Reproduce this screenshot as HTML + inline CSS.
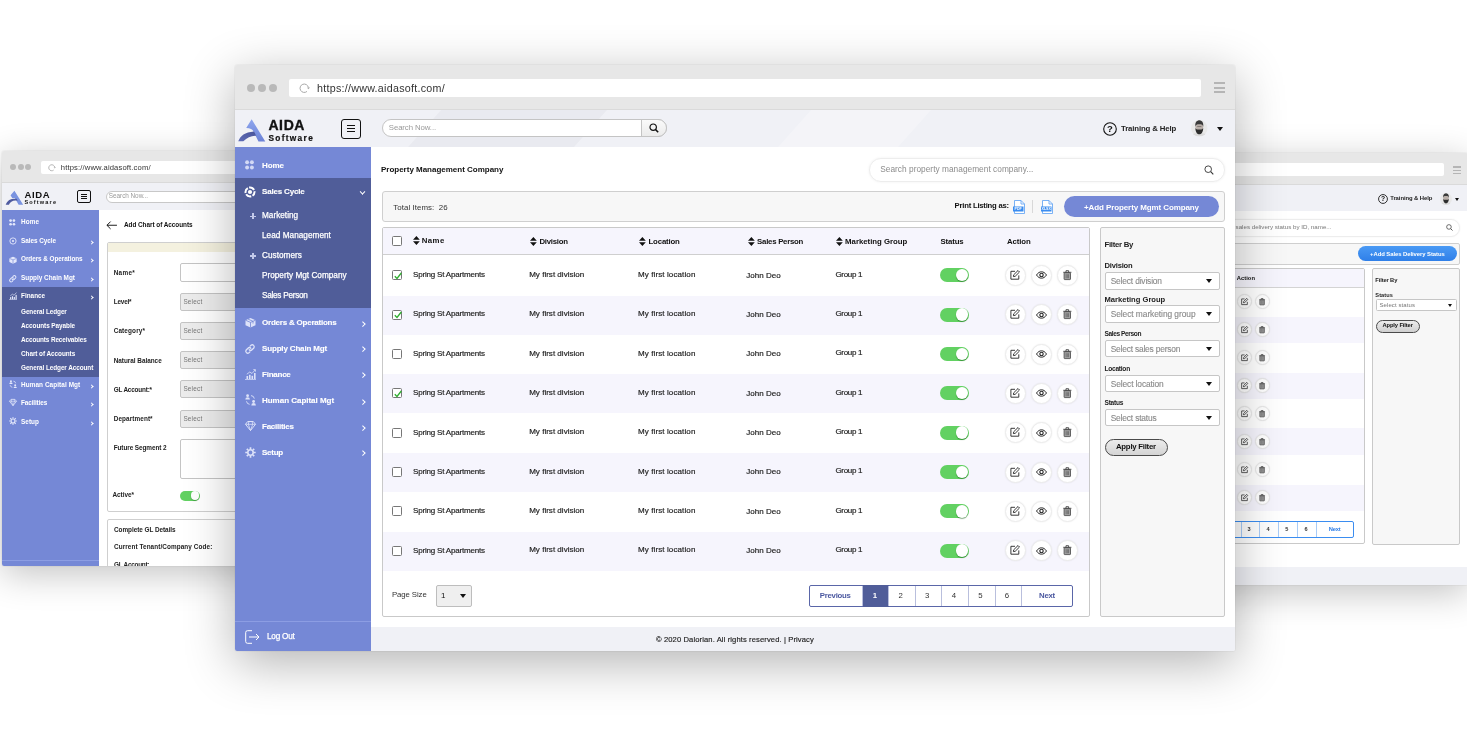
<!DOCTYPE html>
<html lang="en">
<head>
<meta charset="utf-8">
<title>AIDA Software - Property Management Company</title>
<style>
*{box-sizing:border-box;margin:0;padding:0}
html,body{width:1467px;height:738px;overflow:hidden;background:#fff}
body{font-family:"Liberation Sans",sans-serif;color:#1c1c1c;position:relative;font-size:8px}
.abs{position:absolute}
.win{position:absolute;background:#fff;overflow:hidden;will-change:transform}
.chrome{position:absolute;left:0;top:0;right:0;background:#e7e7e7;z-index:2}
.dot{position:absolute;border-radius:50%;background:#b9b9b9}
.url{position:absolute;background:#fff;border-radius:2px;color:#333}
.hdr{position:absolute;left:0;right:0;background:#f0f1f6}
.side{position:absolute;left:0;background:#7588d6;color:#fff;font-weight:bold}
.t{position:absolute;white-space:nowrap;line-height:1}
svg{position:absolute;overflow:visible}
/* main window */
#w1{left:235px;top:65px;width:1000px;height:586px;border-radius:2px;box-shadow:0 12px 50px rgba(0,0,0,.3),0 0 1.500px rgba(0,0,0,.2)}
#w1 .chrome{height:45px;border-bottom:1px solid #dadada}
#w1 .hdr{top:44px;height:38px}
#w1 .side{top:82px;width:136px;height:504px}
#w1 .side .dark{position:absolute;left:0;top:26px;width:136px;height:134px;background:#505d99}
#w1 .side .t{font-size:8.3px;letter-spacing:-.1px}
#w1 .side .sub{font-weight:normal;font-size:8.3px}
.chev{position:absolute;width:3.600px;height:3.600px;border-right:1.100px solid #fff;border-top:1.100px solid #fff;transform:rotate(45deg)}
.row{position:absolute;left:148px;width:705px;height:39.5px}
.row.alt{background:#f6f5fd}
.row .t{font-size:7.8px;color:#222}
.cb{position:absolute;width:10px;height:10px;border:1px solid #777;border-radius:1.500px;background:#fff}
.tog{position:absolute;width:29px;height:14px;border-radius:7px;background:#62d162}
.tog:after{content:"";position:absolute;right:.8px;top:.8px;width:12.400px;height:12.400px;border-radius:50%;background:#fff;box-shadow:0 1px 1px rgba(0,70,0,.45)}
.ic{position:absolute;width:21px;height:21px;border-radius:50%;background:#fff;border:1px solid #ececec;box-shadow:0 0 2px rgba(0,0,0,.08)}
.sel{position:absolute;background:#fff;border:1px solid #c9c9c9;border-radius:2px;font-size:7.8px;color:#8a8a8a}
.sel .t{left:5px;top:4px}
.sel:after{content:"";position:absolute;right:5px;top:6px;border-left:3.5px solid transparent;border-right:3.5px solid transparent;border-top:4px solid #111}
.lbl{font-size:7.6px;font-weight:bold;color:#222}
.pg{position:absolute;top:0;height:22px;border-left:1px solid #c6cae0;font-size:7.8px;color:#333;text-align:center;line-height:21px}
</style>
</head>
<body>
<!-- ================= LEFT WINDOW ================= -->
<div class="win" id="w2" style="left:2px;top:151px;width:705px;height:415px;border-radius:2px;box-shadow:0 8px 36px rgba(0,0,0,.24),0 0 1.500px rgba(0,0,0,.2)">
<div class="abs" style="left:0.0px;top:0.0px;width:705.0px;height:32.0px;background:#e7e7e7;border-bottom:1px solid #dadada"></div>
<div class="abs" style="left:7.8px;top:13.2px;width:6.0px;height:6.0px;background:#b9b9b9;border-radius:50%"></div>
<div class="abs" style="left:15.6px;top:13.2px;width:6.0px;height:6.0px;background:#b9b9b9;border-radius:50%"></div>
<div class="abs" style="left:23.3px;top:13.2px;width:6.0px;height:6.0px;background:#b9b9b9;border-radius:50%"></div>
<div class="abs" style="left:38.5px;top:10.0px;width:642.5px;height:13.0px;background:#fff;border-radius:2px"></div>
<svg width="7.5" height="7.5" viewBox="0 0 10 10" style="left:45.5px;top:12.7px"><path d="M7.570 8.060A4 4 0 1 1 8.940 4.310" fill="none" stroke="#a8a8a8" stroke-width="1.100"/><path d="M9.180 5.900L10.400 4.050 7.500 4.500z" fill="#a8a8a8"/></svg>
<div class="t" style="left:58.8px;top:12.8px;font-size:7.600px;color:#333;letter-spacing:0.15px;">https://www.aidasoft.com/</div>
<div class="abs" style="left:0.0px;top:32.0px;width:705.0px;height:27.0px;background:#f0f1f6"></div>
<svg width="19.5" height="15.5" viewBox="0 0 28 24" style="left:2.5px;top:38.5px"><path d="M13.500 1L27 23H20L14 12.500 10 12.500 7.500 8z" fill="#7a93e0"/><path d="M0 23C3 15 8 13 17 13.500L18.500 16.500C11 15.500 7 18 5 23z" fill="#4f5ba0"/></svg>
<div class="t" style="left:22.4px;top:38.7px;font-size:9.500px;font-weight:bold;color:#111;letter-spacing:0.69px;">AIDA</div>
<div class="t" style="left:22.4px;top:49.0px;font-size:5.600px;font-weight:bold;color:#111;letter-spacing:1.14px;">Software</div>
<div class="abs" style="left:75.0px;top:38.5px;width:14.0px;height:13.5px;border:1px solid #111;border-radius:2px"></div>
<div class="abs" style="left:79.2px;top:43.0px;width:5.6px;height:0.9px;background:#111"></div>
<div class="abs" style="left:79.2px;top:45.2px;width:5.6px;height:0.9px;background:#111"></div>
<div class="abs" style="left:79.2px;top:47.4px;width:5.6px;height:0.9px;background:#111"></div>
<div class="abs" style="left:103.5px;top:39.5px;width:294.5px;height:12.0px;background:#fff;border:1px solid #c8c8c8;border-radius:6px"></div>
<div class="t" style="left:106.8px;top:42.3px;font-size:6.400px;color:#9a9a9a;letter-spacing:-0.04px;">Search Now...</div>
<div class="abs" style="left:0.0px;top:59.0px;width:97.0px;height:356.0px;background:#7588d6"></div>
<div class="abs" style="left:0.0px;top:136.0px;width:97.0px;height:90.0px;background:#505d99"></div>
<div class="t" style="left:19.0px;top:67.8px;font-size:6.400px;font-weight:bold;color:#fff;letter-spacing:0.14px;">Home</div>
<div class="t" style="left:19.0px;top:86.8px;font-size:6.400px;font-weight:bold;color:#fff;letter-spacing:-0.04px;">Sales Cycle</div>
<div class="chev" style="left:88px;top:89.8px;width:3px;height:3px;border-width:.9px"></div>
<div class="t" style="left:19.0px;top:105.1px;font-size:6.400px;font-weight:bold;color:#fff;letter-spacing:-0.07px;">Orders &amp; Operations</div>
<div class="chev" style="left:88px;top:108.1px;width:3px;height:3px;border-width:.9px"></div>
<div class="t" style="left:19.0px;top:123.8px;font-size:6.400px;font-weight:bold;color:#fff;letter-spacing:-0.00px;">Supply Chain Mgt</div>
<div class="chev" style="left:88px;top:126.8px;width:3px;height:3px;border-width:.9px"></div>
<div class="t" style="left:19.0px;top:141.8px;font-size:6.400px;font-weight:bold;color:#fff;letter-spacing:0.00px;">Finance</div>
<div class="chev" style="left:88px;top:144.8px;width:3px;height:3px;border-width:.9px"></div>
<div class="t" style="left:19.0px;top:230.7px;font-size:6.400px;font-weight:bold;color:#fff;letter-spacing:0.08px;">Human Capital Mgt</div>
<div class="chev" style="left:88px;top:233.7px;width:3px;height:3px;border-width:.9px"></div>
<div class="t" style="left:19.0px;top:248.6px;font-size:6.400px;font-weight:bold;color:#fff;letter-spacing:-0.12px;">Facilities</div>
<div class="chev" style="left:88px;top:251.6px;width:3px;height:3px;border-width:.9px"></div>
<div class="t" style="left:19.0px;top:268.1px;font-size:6.400px;font-weight:bold;color:#fff;letter-spacing:0.03px;">Setup</div>
<div class="chev" style="left:88px;top:271.1px;width:3px;height:3px;border-width:.9px"></div>
<div class="t" style="left:19.0px;top:157.8px;font-size:6.400px;font-weight:bold;color:#fff;letter-spacing:-0.08px;">General Ledger</div>
<div class="t" style="left:19.0px;top:171.8px;font-size:6.400px;font-weight:bold;color:#fff;letter-spacing:-0.06px;">Accounts Payable</div>
<div class="t" style="left:19.0px;top:185.6px;font-size:6.400px;font-weight:bold;color:#fff;letter-spacing:-0.11px;">Accounts Receivables</div>
<div class="t" style="left:19.0px;top:199.6px;font-size:6.400px;font-weight:bold;color:#fff;letter-spacing:-0.06px;">Chart of Accounts</div>
<div class="t" style="left:19.0px;top:213.8px;font-size:6.400px;font-weight:bold;color:#fff;letter-spacing:-0.08px;">General Ledger Account</div>
<svg width="6.5" height="7" viewBox="0 0 9 10" style="left:7.0px;top:67.5px"><circle cx="2.100" cy="2.300" r="1.900" fill="#e4e8fb"/><circle cx="6.900" cy="2.300" r="1.900" fill="#e4e8fb"/><circle cx="2.100" cy="7.500" r="1.900" fill="#e4e8fb"/><circle cx="6.900" cy="7.500" r="1.900" fill="#e4e8fb"/></svg>
<svg width="8" height="8" viewBox="0 0 12 12" style="left:6.5px;top:86.0px"><circle cx="6" cy="6" r="4.700" fill="none" stroke="#e4e8fb" stroke-width="1.300"/><circle cx="6" cy="6" r="1.600" fill="#e4e8fb"/></svg>
<svg width="8" height="8" viewBox="0 0 11 11" style="left:6.5px;top:104.5px"><path d="M.5 3.200L5.500 1 10.500 3.200 10.500 8.300 5.500 10.500 .5 8.300z" fill="#e4e8fb"/><path d="M.5 3.200L5.500 5.400 10.500 3.200M5.500 5.400V10.500" fill="none" stroke="#7588d6" stroke-width=".9"/></svg>
<svg width="7.5" height="7.5" viewBox="0 0 10 10" style="left:6.5px;top:123.5px"><g fill="none" stroke="#e4e8fb" stroke-width="1.400" stroke-linecap="round"><path d="M4.200 5.800a2 2 0 0 0 2.800 0l1.800-1.800a2 2 0 0 0-2.800-2.800l-.9.900"/><path d="M5.800 4.200a2 2 0 0 0-2.800 0L1.200 6a2 2 0 0 0 2.800 2.800l.9-.9"/></g></svg>
<svg width="8" height="8" viewBox="0 0 11 11" style="left:6.5px;top:140.5px"><g fill="#e4e8fb"><rect x="1.500" y="7" width="1.600" height="3"/><rect x="4" y="5.800" width="1.600" height="4.200"/><rect x="6.500" y="6.800" width="1.600" height="3.200"/><rect x="9" y="4" width="1.600" height="6"/><rect x="0" y="10.300" width="11" height=".7"/></g><path d="M1.800 5.200L4.800 3 7 4.500 10.200 .8" fill="none" stroke="#e4e8fb" stroke-width=".9"/></svg>
<svg width="8" height="8.5" viewBox="0 0 11 12" style="left:6.5px;top:229.0px"><g fill="#e4e8fb"><circle cx="2.600" cy="1.700" r="1.400"/><path d="M.3 5.600a2.300 2.300 0 0 1 4.600 0z"/><circle cx="8.600" cy="7.500" r="1.400"/><path d="M6.300 11.400a2.300 2.300 0 0 1 4.600 0z"/></g><path d="M6 1.600a3.500 3.500 0 0 1 3.300 3M4.600 10.300A3.500 3.500 0 0 1 1.500 7.300" fill="none" stroke="#e4e8fb" stroke-width="1"/></svg>
<svg width="8" height="7" viewBox="0 0 11 10" style="left:6.5px;top:247.5px"><path d="M2.700 .5H8.300L10.500 3.300 5.500 9.500 .5 3.300z" fill="none" stroke="#e4e8fb" stroke-width="1.100"/><path d="M.5 3.300H10.500M4 .5L3.300 3.300 5.500 9.500 7.700 3.300 7 .5" fill="none" stroke="#e4e8fb" stroke-width=".9"/></svg>
<svg width="8" height="8" viewBox="0 0 11 11" style="left:6.5px;top:265.5px"><circle cx="5.500" cy="5.500" r="2.700" fill="none" stroke="#e4e8fb" stroke-width="1.600"/><g stroke="#e4e8fb" stroke-width="1.700"><path d="M5.500 .3V2M5.500 9V10.700M.3 5.500H2M9 5.500H10.700M1.800 1.800L3 3M8 8L9.200 9.200M9.200 1.800L8 3M3 8L1.800 9.200"/></g></svg>
<div class="abs" style="left:0.0px;top:409.0px;width:97.0px;height:0.8px;background:#8c9de3"></div>
<svg width="11.5" height="8.5" viewBox="0 0 12 9" style="left:103.5px;top:69.5px"><path d="M11.500 4.500H1M4.800 .6L.9 4.500 4.800 8.400" fill="none" stroke="#111" stroke-width="1"/></svg>
<div class="t" style="left:122.0px;top:70.7px;font-size:6.400px;font-weight:bold;color:#111;letter-spacing:-0.04px;">Add Chart of Accounts</div>
<div class="abs" style="left:104.5px;top:90.5px;width:493.5px;height:270.0px;background:#fff;border:1px solid #cfcfcf;border-radius:2px"></div>
<div class="abs" style="left:105.5px;top:91.5px;width:491.5px;height:9.5px;background:#f4f1df"></div>
<div class="t" style="left:111.7px;top:119.1px;font-size:6.400px;font-weight:bold;color:#222;letter-spacing:0.32px;">Name*</div>
<div class="t" style="left:111.7px;top:148.0px;font-size:6.400px;font-weight:bold;color:#222;letter-spacing:-0.19px;">Level*</div>
<div class="t" style="left:111.7px;top:176.9px;font-size:6.400px;font-weight:bold;color:#222;letter-spacing:0.13px;">Category*</div>
<div class="t" style="left:111.7px;top:206.6px;font-size:6.400px;font-weight:bold;color:#222;letter-spacing:-0.02px;">Natural Balance</div>
<div class="t" style="left:111.7px;top:235.9px;font-size:6.400px;font-weight:bold;color:#222;letter-spacing:-0.19px;">GL Account:*</div>
<div class="t" style="left:111.7px;top:264.8px;font-size:6.400px;font-weight:bold;color:#222;letter-spacing:0.09px;">Department*</div>
<div class="t" style="left:111.7px;top:293.7px;font-size:6.400px;font-weight:bold;color:#222;letter-spacing:-0.07px;">Future Segment 2</div>
<div class="t" style="left:110.5px;top:340.8px;font-size:6.400px;font-weight:bold;color:#222;letter-spacing:-0.03px;">Active*</div>
<div class="abs" style="left:178.0px;top:112.0px;width:300.0px;height:18.7px;background:#fff;border:1px solid #c4c4c4;border-radius:2px"></div>
<div class="abs" style="left:178.0px;top:142.3px;width:300.0px;height:18.2px;background:#ececec;border:1px solid #c4c4c4;border-radius:2px"></div>
<div class="t" style="left:181.4px;top:148.2px;font-size:6.400px;color:#777;letter-spacing:0.20px;">Select</div>
<div class="abs" style="left:178.0px;top:171.2px;width:300.0px;height:18.2px;background:#ececec;border:1px solid #c4c4c4;border-radius:2px"></div>
<div class="t" style="left:181.4px;top:177.1px;font-size:6.400px;color:#777;letter-spacing:0.20px;">Select</div>
<div class="abs" style="left:178.0px;top:200.4px;width:300.0px;height:18.0px;background:#ececec;border:1px solid #c4c4c4;border-radius:2px"></div>
<div class="t" style="left:181.4px;top:206.2px;font-size:6.400px;color:#777;letter-spacing:0.20px;">Select</div>
<div class="abs" style="left:178.0px;top:229.3px;width:300.0px;height:18.2px;background:#ececec;border:1px solid #c4c4c4;border-radius:2px"></div>
<div class="t" style="left:181.4px;top:235.2px;font-size:6.400px;color:#777;letter-spacing:0.20px;">Select</div>
<div class="abs" style="left:178.0px;top:258.9px;width:300.0px;height:18.2px;background:#ececec;border:1px solid #c4c4c4;border-radius:2px"></div>
<div class="t" style="left:181.4px;top:264.8px;font-size:6.400px;color:#777;letter-spacing:0.20px;">Select</div>
<div class="abs" style="left:178.0px;top:288.2px;width:300.0px;height:40.1px;background:#fff;border:1px solid #c4c4c4;border-radius:2px"></div>
<div class="abs" style="left:177.8px;top:339.6px;width:20.2px;height:10.2px;border-radius:5.100px;background:#62d162"></div>
<div class="abs" style="left:189.0px;top:340.4px;width:8.4px;height:8.4px;background:#fff;border-radius:50%;box-shadow:0 .7px 1px rgba(0,70,0,.45)"></div>
<div class="abs" style="left:104.5px;top:368.3px;width:493.5px;height:80.7px;background:#fff;border:1px solid #cfcfcf;border-radius:2px"></div>
<div class="t" style="left:112.0px;top:375.6px;font-size:6.400px;font-weight:bold;color:#222;letter-spacing:-0.04px;">Complete GL Details</div>
<div class="t" style="left:112.0px;top:392.8px;font-size:6.400px;font-weight:bold;color:#222;letter-spacing:0.08px;">Current Tenant/Company Code:</div>
<div class="t" style="left:112.0px;top:411.3px;font-size:6.400px;font-weight:bold;color:#222;letter-spacing:-0.25px;">GL Account:</div>
</div>
<!-- ================= RIGHT WINDOW ================= -->
<div class="win" id="w3" style="left:763px;top:153px;width:705px;height:432px;border-radius:2px;box-shadow:0 8px 36px rgba(0,0,0,.24),0 0 1.500px rgba(0,0,0,.2)">
<div class="abs" style="left:0.0px;top:0.0px;width:705.0px;height:32.0px;background:#e7e7e7;border-bottom:1px solid #dadada"></div>
<div class="abs" style="left:38.0px;top:10.0px;width:643.2px;height:13.0px;background:#fff;border-radius:2px"></div>
<div class="abs" style="left:690.0px;top:13.3px;width:8.0px;height:1.4px;background:#b5b5b5"></div>
<div class="abs" style="left:690.0px;top:16.5px;width:8.0px;height:1.4px;background:#b5b5b5"></div>
<div class="abs" style="left:690.0px;top:19.7px;width:8.0px;height:1.4px;background:#b5b5b5"></div>
<div class="abs" style="left:0.0px;top:32.0px;width:705.0px;height:25.6px;background:#f0f1f6"></div>
<svg width="10" height="10" viewBox="0 0 14 14" style="left:614.8px;top:40.7px"><circle cx="7" cy="7" r="6.200" fill="none" stroke="#111" stroke-width="1.200"/><text x="7" y="10.300" font-size="9.500" font-weight="bold" text-anchor="middle" font-family="Liberation Sans, sans-serif" fill="#111">?</text></svg>
<div class="t" style="left:627.2px;top:43.0px;font-size:5.900px;font-weight:bold;color:#222;letter-spacing:-0.07px;">Training &amp; Help</div>
<svg width="12" height="12" viewBox="0 0 20 20" style="left:677.2px;top:39.7px"><defs><clipPath id="av3"><circle cx="10" cy="10" r="10"/></clipPath></defs><g clip-path="url(#av3)"><rect width="20" height="20" fill="#e9e9e9"/><path d="M1 20C2 16.500 5 15.500 10 15.500S18 16.500 19 20z" fill="#dcdcdc"/><ellipse cx="10" cy="8.500" rx="4.700" ry="6.300" fill="#b9afa9"/><path d="M5.200 8C4.800 3 6.800 .4 10 .4S15.200 3 14.800 8C14.300 5.600 13 5 10 5S5.700 5.600 5.200 8z" fill="#3a3a3a"/><path d="M5.300 9.500C5.300 14.500 7.500 17.300 10 17.300S14.700 14.500 14.700 9.500C13.800 11.500 12.500 11.300 10 11.300S6.200 11.500 5.300 9.500z" fill="#2e2e2e"/></g></svg>
<div class="abs" style="left:691.7px;top:44.6px;border-left:2.500px solid transparent;border-right:2.500px solid transparent;border-top:3px solid #111"></div>
<div class="abs" style="left:337.0px;top:65.7px;width:360.2px;height:18.0px;background:#fff;border:1px solid #ededed;border-radius:9px;box-shadow:0 0 2px rgba(0,0,0,.06)"></div>
<div class="t" style="left:268.5px;width:300px;text-align:right;top:71.2px;font-size:6.200px;color:#777;">Search sales delivery status by ID, name...</div>
<svg width="7" height="7" viewBox="0 0 10 10" style="left:683.0px;top:70.8px"><circle cx="4.200" cy="4.200" r="3.300" fill="none" stroke="#333" stroke-width="1"/><path d="M6.700 6.700L9.300 9.300" stroke="#333" stroke-width="1.200"/></svg>
<div class="abs" style="left:277.0px;top:90.0px;width:420.0px;height:22.0px;background:#f7f7f7;border:1px solid #cfcfcf;border-radius:2px"></div>
<div class="abs" style="left:595.0px;top:93.0px;width:99.0px;height:15.2px;background:linear-gradient(#4a9af5,#2f7fe8);border-radius:8px"></div>
<div class="t" style="left:607.1px;top:98.5px;font-size:5.900px;font-weight:bold;color:#fff;letter-spacing:-0.06px;">+Add Sales Delivery Status</div>
<div class="abs" style="left:277.0px;top:115.0px;width:324.5px;height:275.5px;background:#fff;border:1px solid #c9c9c9;border-radius:2px"></div>
<div class="abs" style="left:278.0px;top:116.0px;width:322.5px;height:18.5px;background:#f6f5fd;border-bottom:1px solid #d4d4d4"></div>
<div class="t" style="left:473.8px;top:122.7px;font-size:5.800px;font-weight:bold;color:#111;letter-spacing:0.03px;">Action</div>
<div class="abs" style="left:473.7px;top:141.1px;width:15.0px;height:15.0px;background:#fff;border:1px solid #e6e6e6;border-radius:50%;box-shadow:0 0 1.500px rgba(0,0,0,.08)"></div>
<svg width="7.2" height="7.2" viewBox="0 0 10 10" style="left:477.6px;top:145.0px"><path d="M5 1.300H.9V9.200H8.800V5.400" fill="none" stroke="#222" stroke-width="1"/><path d="M8 .5L9.500 2 5.200 6.300 3.400 6.600 3.700 4.800z" fill="none" stroke="#222" stroke-width="1" stroke-linejoin="round"/></svg>
<div class="abs" style="left:491.6px;top:141.1px;width:15.0px;height:15.0px;background:#fff;border:1px solid #e6e6e6;border-radius:50%;box-shadow:0 0 1.500px rgba(0,0,0,.08)"></div>
<svg width="6.2" height="7.2" viewBox="0 0 8.600 10" style="left:496.0px;top:144.9px"><rect x="1.100" y="2.700" width="6.400" height="6.900" rx=".6" fill="#a4a4a4" stroke="#444" stroke-width=".9"/><path d="M.2 2.300H8.400M3 2.100V.7H5.600V2.100" fill="none" stroke="#444" stroke-width="1"/><path d="M3.100 4.200V8.200M5.500 4.200V8.200" stroke="#555" stroke-width=".7"/></svg>
<div class="abs" style="left:278.0px;top:163.5px;width:322.5px;height:26.7px;background:#f6f5fd"></div>
<div class="abs" style="left:473.7px;top:169.3px;width:15.0px;height:15.0px;background:#fff;border:1px solid #e6e6e6;border-radius:50%;box-shadow:0 0 1.500px rgba(0,0,0,.08)"></div>
<svg width="7.2" height="7.2" viewBox="0 0 10 10" style="left:477.6px;top:173.2px"><path d="M5 1.300H.9V9.200H8.800V5.400" fill="none" stroke="#222" stroke-width="1"/><path d="M8 .5L9.500 2 5.200 6.300 3.400 6.600 3.700 4.800z" fill="none" stroke="#222" stroke-width="1" stroke-linejoin="round"/></svg>
<div class="abs" style="left:491.6px;top:169.3px;width:15.0px;height:15.0px;background:#fff;border:1px solid #e6e6e6;border-radius:50%;box-shadow:0 0 1.500px rgba(0,0,0,.08)"></div>
<svg width="6.2" height="7.2" viewBox="0 0 8.600 10" style="left:496.0px;top:173.1px"><rect x="1.100" y="2.700" width="6.400" height="6.900" rx=".6" fill="#a4a4a4" stroke="#444" stroke-width=".9"/><path d="M.2 2.300H8.400M3 2.100V.7H5.600V2.100" fill="none" stroke="#444" stroke-width="1"/><path d="M3.100 4.200V8.200M5.500 4.200V8.200" stroke="#555" stroke-width=".7"/></svg>
<div class="abs" style="left:473.7px;top:197.0px;width:15.0px;height:15.0px;background:#fff;border:1px solid #e6e6e6;border-radius:50%;box-shadow:0 0 1.500px rgba(0,0,0,.08)"></div>
<svg width="7.2" height="7.2" viewBox="0 0 10 10" style="left:477.6px;top:200.9px"><path d="M5 1.300H.9V9.200H8.800V5.400" fill="none" stroke="#222" stroke-width="1"/><path d="M8 .5L9.500 2 5.200 6.300 3.400 6.600 3.700 4.800z" fill="none" stroke="#222" stroke-width="1" stroke-linejoin="round"/></svg>
<div class="abs" style="left:491.6px;top:197.0px;width:15.0px;height:15.0px;background:#fff;border:1px solid #e6e6e6;border-radius:50%;box-shadow:0 0 1.500px rgba(0,0,0,.08)"></div>
<svg width="6.2" height="7.2" viewBox="0 0 8.600 10" style="left:496.0px;top:200.8px"><rect x="1.100" y="2.700" width="6.400" height="6.900" rx=".6" fill="#a4a4a4" stroke="#444" stroke-width=".9"/><path d="M.2 2.300H8.400M3 2.100V.7H5.600V2.100" fill="none" stroke="#444" stroke-width="1"/><path d="M3.100 4.200V8.200M5.500 4.200V8.200" stroke="#555" stroke-width=".7"/></svg>
<div class="abs" style="left:278.0px;top:219.5px;width:322.5px;height:26.7px;background:#f6f5fd"></div>
<div class="abs" style="left:473.7px;top:225.3px;width:15.0px;height:15.0px;background:#fff;border:1px solid #e6e6e6;border-radius:50%;box-shadow:0 0 1.500px rgba(0,0,0,.08)"></div>
<svg width="7.2" height="7.2" viewBox="0 0 10 10" style="left:477.6px;top:229.2px"><path d="M5 1.300H.9V9.200H8.800V5.400" fill="none" stroke="#222" stroke-width="1"/><path d="M8 .5L9.500 2 5.200 6.300 3.400 6.600 3.700 4.800z" fill="none" stroke="#222" stroke-width="1" stroke-linejoin="round"/></svg>
<div class="abs" style="left:491.6px;top:225.3px;width:15.0px;height:15.0px;background:#fff;border:1px solid #e6e6e6;border-radius:50%;box-shadow:0 0 1.500px rgba(0,0,0,.08)"></div>
<svg width="6.2" height="7.2" viewBox="0 0 8.600 10" style="left:496.0px;top:229.1px"><rect x="1.100" y="2.700" width="6.400" height="6.900" rx=".6" fill="#a4a4a4" stroke="#444" stroke-width=".9"/><path d="M.2 2.300H8.400M3 2.100V.7H5.600V2.100" fill="none" stroke="#444" stroke-width="1"/><path d="M3.100 4.200V8.200M5.500 4.200V8.200" stroke="#555" stroke-width=".7"/></svg>
<div class="abs" style="left:473.7px;top:253.0px;width:15.0px;height:15.0px;background:#fff;border:1px solid #e6e6e6;border-radius:50%;box-shadow:0 0 1.500px rgba(0,0,0,.08)"></div>
<svg width="7.2" height="7.2" viewBox="0 0 10 10" style="left:477.6px;top:256.9px"><path d="M5 1.300H.9V9.200H8.800V5.400" fill="none" stroke="#222" stroke-width="1"/><path d="M8 .5L9.500 2 5.200 6.300 3.400 6.600 3.700 4.800z" fill="none" stroke="#222" stroke-width="1" stroke-linejoin="round"/></svg>
<div class="abs" style="left:491.6px;top:253.0px;width:15.0px;height:15.0px;background:#fff;border:1px solid #e6e6e6;border-radius:50%;box-shadow:0 0 1.500px rgba(0,0,0,.08)"></div>
<svg width="6.2" height="7.2" viewBox="0 0 8.600 10" style="left:496.0px;top:256.8px"><rect x="1.100" y="2.700" width="6.400" height="6.900" rx=".6" fill="#a4a4a4" stroke="#444" stroke-width=".9"/><path d="M.2 2.300H8.400M3 2.100V.7H5.600V2.100" fill="none" stroke="#444" stroke-width="1"/><path d="M3.100 4.200V8.200M5.500 4.200V8.200" stroke="#555" stroke-width=".7"/></svg>
<div class="abs" style="left:278.0px;top:274.9px;width:322.5px;height:26.7px;background:#f6f5fd"></div>
<div class="abs" style="left:473.7px;top:280.7px;width:15.0px;height:15.0px;background:#fff;border:1px solid #e6e6e6;border-radius:50%;box-shadow:0 0 1.500px rgba(0,0,0,.08)"></div>
<svg width="7.2" height="7.2" viewBox="0 0 10 10" style="left:477.6px;top:284.6px"><path d="M5 1.300H.9V9.200H8.800V5.400" fill="none" stroke="#222" stroke-width="1"/><path d="M8 .5L9.500 2 5.200 6.300 3.400 6.600 3.700 4.800z" fill="none" stroke="#222" stroke-width="1" stroke-linejoin="round"/></svg>
<div class="abs" style="left:491.6px;top:280.7px;width:15.0px;height:15.0px;background:#fff;border:1px solid #e6e6e6;border-radius:50%;box-shadow:0 0 1.500px rgba(0,0,0,.08)"></div>
<svg width="6.2" height="7.2" viewBox="0 0 8.600 10" style="left:496.0px;top:284.5px"><rect x="1.100" y="2.700" width="6.400" height="6.900" rx=".6" fill="#a4a4a4" stroke="#444" stroke-width=".9"/><path d="M.2 2.300H8.400M3 2.100V.7H5.600V2.100" fill="none" stroke="#444" stroke-width="1"/><path d="M3.100 4.200V8.200M5.500 4.200V8.200" stroke="#555" stroke-width=".7"/></svg>
<div class="abs" style="left:473.7px;top:308.8px;width:15.0px;height:15.0px;background:#fff;border:1px solid #e6e6e6;border-radius:50%;box-shadow:0 0 1.500px rgba(0,0,0,.08)"></div>
<svg width="7.2" height="7.2" viewBox="0 0 10 10" style="left:477.6px;top:312.7px"><path d="M5 1.300H.9V9.200H8.800V5.400" fill="none" stroke="#222" stroke-width="1"/><path d="M8 .5L9.500 2 5.200 6.300 3.400 6.600 3.700 4.800z" fill="none" stroke="#222" stroke-width="1" stroke-linejoin="round"/></svg>
<div class="abs" style="left:491.6px;top:308.8px;width:15.0px;height:15.0px;background:#fff;border:1px solid #e6e6e6;border-radius:50%;box-shadow:0 0 1.500px rgba(0,0,0,.08)"></div>
<svg width="6.2" height="7.2" viewBox="0 0 8.600 10" style="left:496.0px;top:312.6px"><rect x="1.100" y="2.700" width="6.400" height="6.900" rx=".6" fill="#a4a4a4" stroke="#444" stroke-width=".9"/><path d="M.2 2.300H8.400M3 2.100V.7H5.600V2.100" fill="none" stroke="#444" stroke-width="1"/><path d="M3.100 4.200V8.200M5.500 4.200V8.200" stroke="#555" stroke-width=".7"/></svg>
<div class="abs" style="left:278.0px;top:331.5px;width:322.5px;height:26.7px;background:#f6f5fd"></div>
<div class="abs" style="left:473.7px;top:337.3px;width:15.0px;height:15.0px;background:#fff;border:1px solid #e6e6e6;border-radius:50%;box-shadow:0 0 1.500px rgba(0,0,0,.08)"></div>
<svg width="7.2" height="7.2" viewBox="0 0 10 10" style="left:477.6px;top:341.2px"><path d="M5 1.300H.9V9.200H8.800V5.400" fill="none" stroke="#222" stroke-width="1"/><path d="M8 .5L9.500 2 5.200 6.300 3.400 6.600 3.700 4.800z" fill="none" stroke="#222" stroke-width="1" stroke-linejoin="round"/></svg>
<div class="abs" style="left:491.6px;top:337.3px;width:15.0px;height:15.0px;background:#fff;border:1px solid #e6e6e6;border-radius:50%;box-shadow:0 0 1.500px rgba(0,0,0,.08)"></div>
<svg width="6.2" height="7.2" viewBox="0 0 8.600 10" style="left:496.0px;top:341.1px"><rect x="1.100" y="2.700" width="6.400" height="6.900" rx=".6" fill="#a4a4a4" stroke="#444" stroke-width=".9"/><path d="M.2 2.300H8.400M3 2.100V.7H5.600V2.100" fill="none" stroke="#444" stroke-width="1"/><path d="M3.100 4.200V8.200M5.500 4.200V8.200" stroke="#555" stroke-width=".7"/></svg>
<div class="abs" style="left:417.0px;top:368.3px;width:173.5px;height:16.4px;background:#fff;border:1px solid #3b8df0;border-radius:2px"></div>
<div class="abs" style="left:477.6px;top:369.3px;width:0.8px;height:14.4px;background:#a9ccf7"></div>
<div class="abs" style="left:496.4px;top:369.3px;width:0.8px;height:14.4px;background:#a9ccf7"></div>
<div class="abs" style="left:515.0px;top:369.3px;width:0.8px;height:14.4px;background:#a9ccf7"></div>
<div class="abs" style="left:533.8px;top:369.3px;width:0.8px;height:14.4px;background:#a9ccf7"></div>
<div class="abs" style="left:553.0px;top:369.3px;width:0.8px;height:14.4px;background:#a9ccf7"></div>
<div class="t" style="left:386.1px;width:200px;text-align:center;top:373.9px;font-size:5.600px;color:#333;font-weight:bold;">3</div>
<div class="t" style="left:405.0px;width:200px;text-align:center;top:373.9px;font-size:5.600px;color:#333;font-weight:bold;">4</div>
<div class="t" style="left:423.8px;width:200px;text-align:center;top:373.9px;font-size:5.600px;color:#333;font-weight:bold;">5</div>
<div class="t" style="left:443.0px;width:200px;text-align:center;top:373.9px;font-size:5.600px;color:#333;font-weight:bold;">6</div>
<div class="t" style="left:565.8px;top:373.8px;font-size:5.800px;color:#2f7fe8;font-weight:bold;letter-spacing:-0.19px;">Next</div>
<div class="abs" style="left:609.4px;top:115.0px;width:88.1px;height:276.5px;background:#f7f7f7;border:1px solid #c9c9c9;border-radius:2px"></div>
<div class="t" style="left:612.3px;top:124.9px;font-size:5.800px;font-weight:bold;color:#222;letter-spacing:-0.14px;">Filter By</div>
<div class="t" style="left:612.3px;top:139.6px;font-size:5.600px;font-weight:bold;color:#222;letter-spacing:0.10px;">Status</div>
<div class="abs" style="left:613.3px;top:146.0px;width:80.3px;height:12.2px;background:#fff;border:1px solid #c6c6c6;border-radius:1.500px"></div>
<div class="t" style="left:616.5px;top:149.3px;font-size:6px;color:#777;letter-spacing:0.09px;">Select status</div>
<div class="abs" style="left:684.5px;top:151.0px;border-left:2.500px solid transparent;border-right:2.500px solid transparent;border-top:3px solid #111"></div>
<div class="abs" style="left:613.3px;top:166.8px;width:43.5px;height:13.0px;background:linear-gradient(#ececec,#d0d0d0);border:1px solid #4a4a4a;border-radius:7px"></div>
<div class="t" style="left:619.4px;top:170.0px;font-size:5.800px;font-weight:bold;color:#111;letter-spacing:-0.12px;">Apply Filter</div>
<div class="abs" style="left:0.0px;top:413.8px;width:705.0px;height:18.2px;background:#f0f1f6"></div>
</div>
<!-- ================= MAIN WINDOW ================= -->
<div class="win" id="w1">
  <div class="chrome">
    <div class="dot" style="left:12px;top:19px;width:8px;height:8px"></div>
    <div class="dot" style="left:23px;top:19px;width:8px;height:8px"></div>
    <div class="dot" style="left:34px;top:19px;width:8px;height:8px"></div>
    <div class="url" style="left:54px;top:14px;width:912px;height:18px">
      <svg width="10.500" height="10.500" viewBox="0 0 10 10" style="left:10.200px;top:3.600px"><path d="M7.570 8.060A4 4 0 1 1 8.940 4.310" fill="none" stroke="#a8a8a8" stroke-width=".95"/><path d="M9.180 5.900L10.400 4.050 7.500 4.500z" fill="#a8a8a8"/></svg>
      <div class="t" style="left:28px;top:3.5px;font-size:10.700px;letter-spacing:.27px;color:#333">https://www.aidasoft.com/</div>
    </div>
    <div class="abs" style="left:979px;top:17px;width:11px;height:2px;background:#b5b5b5"></div>
    <div class="abs" style="left:979px;top:21.5px;width:11px;height:2px;background:#b5b5b5"></div>
    <div class="abs" style="left:979px;top:26px;width:11px;height:2px;background:#b5b5b5"></div>
  </div>
  <div class="hdr">
    <!-- logo -->
    <svg width="27.300" height="23.200" viewBox="0 0 400 340" style="left:2.700px;top:9.500px"><defs><linearGradient id="lg1" x1="0" y1="0" x2="0" y2="1"><stop offset="0" stop-color="#8ea6ee"/><stop offset="1" stop-color="#6c82d6"/></linearGradient><linearGradient id="lg2" x1="0" y1="1" x2="1" y2="0"><stop offset="0" stop-color="#5f6cb6"/><stop offset="1" stop-color="#48539a"/></linearGradient></defs><path d="M200 5L400 330H300L225 180C215 150 180 135 120 132z" fill="url(#lg1)"/><path d="M3 327C35 245 100 192 235 182L268 248C195 242 135 280 78 327z" fill="url(#lg2)"/></svg>
    <div class="t" style="left:33.400px;top:9.200px;font-size:14px;font-weight:bold;letter-spacing:.62px;color:#111;-webkit-text-stroke:.35px #111">AIDA</div>
    <div class="t" style="left:33.400px;top:25px;font-size:8.300px;font-weight:bold;letter-spacing:1.330px;color:#111;-webkit-text-stroke:.2px #111">Software</div>
    <div class="abs" style="left:106px;top:10px;width:20px;height:20px;border:1.3px solid #111;border-radius:3px"></div>
    <div class="abs" style="left:112px;top:16px;width:8px;height:1.2px;background:#111"></div>
    <div class="abs" style="left:112px;top:19px;width:8px;height:1.2px;background:#111"></div>
    <div class="abs" style="left:112px;top:22px;width:8px;height:1.2px;background:#111"></div>
    <div class="abs" style="left:190px;top:0;width:166px;height:38px;background:rgba(0,0,20,.028);transform:skewX(-41.700deg)"></div>
    <div class="abs" style="left:560px;top:0;width:120px;height:38px;background:rgba(255,255,255,.25);transform:skewX(-41.700deg)"></div>
    <!-- search -->
    <div class="abs" style="left:147px;top:10px;width:285px;height:18px;border:1px solid #c4c4c4;border-radius:9px;background:#fff"></div>
    <div class="abs" style="left:406px;top:10px;width:26px;height:18px;border:1px solid #c4c4c4;border-radius:0 9px 9px 0;background:linear-gradient(#fafafa,#ebebeb)"></div>
    <div class="t" style="left:153.800px;top:15.400px;font-size:7.800px;color:#9a9a9a;letter-spacing:-0.10px">Search Now...</div>
    <svg width="10" height="10" viewBox="0 0 10 10" style="left:413.500px;top:14.300px"><circle cx="4.200" cy="4.200" r="3.200" fill="none" stroke="#111" stroke-width="1.200"/><path d="M6.600 6.600L9.200 9.200" stroke="#111" stroke-width="1.500"/></svg>
    <!-- help -->
    <svg width="14" height="14" viewBox="0 0 14 14" style="left:868px;top:12.900px"><circle cx="7" cy="7" r="6.300" fill="none" stroke="#111" stroke-width="1.100"/><text x="7" y="10.300" font-size="9.500" font-weight="bold" text-anchor="middle" font-family="Liberation Sans, sans-serif" fill="#111">?</text></svg>
    <div class="t" style="left:886px;top:15.600px;font-size:7.800px;font-weight:bold;color:#222;letter-spacing:-0.14px">Training &amp; Help</div>
    <!-- avatar -->
    <svg width="16.600" height="16.600" viewBox="0 0 20 20" style="left:956.100px;top:11.200px"><defs><clipPath id="av"><circle cx="10" cy="10" r="10"/></clipPath></defs><g clip-path="url(#av)"><rect width="20" height="20" fill="#e9e9e9"/><path d="M1 20C2 16.500 5 15.500 10 15.500S18 16.500 19 20z" fill="#dcdcdc"/><ellipse cx="10" cy="8.500" rx="4.700" ry="6.300" fill="#b9afa9"/><path d="M5.200 8C4.800 3 6.800 .4 10 .4S15.200 3 14.800 8C14.300 5.600 13 5 10 5S5.700 5.600 5.200 8z" fill="#3a3a3a"/><path d="M5.300 9.500C5.300 14.500 7.500 17.300 10 17.300S14.700 14.500 14.700 9.500C13.800 11.500 12.500 11.300 10 11.300S6.200 11.500 5.300 9.500z" fill="#2e2e2e"/><rect x="7.500" y="7.300" width="5" height=".8" fill="#6a625e"/></g></svg>
    <div class="abs" style="left:982px;top:17.800px;border-left:3.400px solid transparent;border-right:3.400px solid transparent;border-top:4.200px solid #111"></div>
  </div>
  <div class="abs" style="left:0.0px;top:82.0px;width:136.0px;height:504.0px;background:#7588d6"></div>
<div class="abs" style="left:0.0px;top:113.0px;width:136.0px;height:130.0px;background:#505d99"></div>
<div class="t" style="left:27.0px;top:96.5px;font-size:8px;font-weight:bold;color:#fff;-webkit-text-stroke:.12px #fff;letter-spacing:-0.11px;">Home</div>
<div class="t" style="left:27.0px;top:122.5px;font-size:8px;font-weight:bold;color:#fff;-webkit-text-stroke:.12px #fff;letter-spacing:-0.18px;">Sales Cycle</div>
<div class="t" style="left:27.0px;top:147.1px;font-size:8.2px;color:#fff;-webkit-text-stroke:.25px #fff;letter-spacing:0.02px;">Marketing</div>
<div class="abs" style="left:15.3px;top:150.5px;width:5.4px;height:1.2px;background:#c3c9ea"></div>
<div class="abs" style="left:17.4px;top:148.4px;width:1.2px;height:5.4px;background:#c3c9ea"></div>
<div class="t" style="left:27.0px;top:167.3px;font-size:8.2px;color:#fff;-webkit-text-stroke:.25px #fff;letter-spacing:0.04px;">Lead Management</div>
<div class="t" style="left:27.0px;top:187.0px;font-size:8.2px;color:#fff;-webkit-text-stroke:.25px #fff;letter-spacing:0.03px;">Customers</div>
<div class="abs" style="left:15.3px;top:190.4px;width:5.4px;height:1.2px;background:#c3c9ea"></div>
<div class="abs" style="left:17.4px;top:188.3px;width:1.2px;height:5.4px;background:#c3c9ea"></div>
<div class="t" style="left:27.0px;top:207.1px;font-size:8.2px;color:#fff;-webkit-text-stroke:.25px #fff;letter-spacing:0.02px;">Property Mgt Company</div>
<div class="t" style="left:27.0px;top:226.9px;font-size:8.2px;color:#fff;-webkit-text-stroke:.25px #fff;letter-spacing:-0.26px;">Sales Person</div>
<div class="t" style="left:27.0px;top:253.7px;font-size:8px;font-weight:bold;color:#fff;-webkit-text-stroke:.12px #fff;letter-spacing:-0.22px;">Orders &amp; Operations</div>
<div class="chev" style="left:125.5px;top:256.5px"></div>
<div class="t" style="left:27.0px;top:279.6px;font-size:8px;font-weight:bold;color:#fff;-webkit-text-stroke:.12px #fff;letter-spacing:-0.16px;">Supply Chain Mgt</div>
<div class="chev" style="left:125.5px;top:282.4px"></div>
<div class="t" style="left:27.0px;top:305.5px;font-size:8px;font-weight:bold;color:#fff;-webkit-text-stroke:.12px #fff;letter-spacing:-0.24px;">Finance</div>
<div class="chev" style="left:125.5px;top:308.3px"></div>
<div class="t" style="left:27.0px;top:331.8px;font-size:8px;font-weight:bold;color:#fff;-webkit-text-stroke:.12px #fff;letter-spacing:-0.02px;">Human Capital Mgt</div>
<div class="chev" style="left:125.5px;top:334.6px"></div>
<div class="t" style="left:27.0px;top:358.0px;font-size:8px;font-weight:bold;color:#fff;-webkit-text-stroke:.12px #fff;letter-spacing:-0.26px;">Facilities</div>
<div class="chev" style="left:125.5px;top:360.8px"></div>
<div class="t" style="left:27.0px;top:383.6px;font-size:8px;font-weight:bold;color:#fff;-webkit-text-stroke:.12px #fff;letter-spacing:-0.26px;">Setup</div>
<div class="chev" style="left:125.5px;top:386.4px"></div>
<div class="chev" style="left:126px;top:124.7px;transform:rotate(135deg)"></div>
<div class="abs" style="left:0.0px;top:555.5px;width:136.0px;height:1.0px;background:#8c9de3"></div>
<div class="t" style="left:32.0px;top:568.1px;font-size:8.2px;color:#fff;-webkit-text-stroke:.25px #fff;letter-spacing:-0.21px;">Log Out</div>
<svg width="9" height="10" viewBox="0 0 9 10" style="left:10.0px;top:95.0px"><g fill="#d3d9f5"><circle cx="2.100" cy="2.300" r="1.950"/><circle cx="6.900" cy="2.300" r="1.950"/><circle cx="2.100" cy="7.500" r="1.950"/><circle cx="6.900" cy="7.500" r="1.950"/></g></svg>
<svg width="12" height="12" viewBox="0 0 12 12" style="left:9.2px;top:121.1px"><circle cx="6" cy="6" r="4.500" fill="none" stroke="#fff" stroke-width="2" stroke-dasharray="5.770 1.300" stroke-dashoffset="1.500"/><circle cx="6" cy="6" r="2.100" fill="#fff"/></svg>
<svg width="11" height="11" viewBox="0 0 11 11" style="left:10.0px;top:252.0px"><path d="M0.500 3.200L5.500 1 10.500 3.200 10.500 8.300 5.500 10.500 0.500 8.300z" fill="#dde2f9"/><path d="M0.500 3.200L5.500 5.400 10.500 3.200M5.500 5.400V10.500M3 2.100L8 4.300V6.500" fill="none" stroke="#7588d6" stroke-width=".8"/></svg>
<svg width="10" height="10" viewBox="0 0 10 10" style="left:10.0px;top:278.5px"><g fill="none" stroke="#dde2f9" stroke-width="1.300" stroke-linecap="round"><path d="M4.200 5.800a2 2 0 0 0 2.800 0l1.800-1.800a2 2 0 0 0-2.800-2.800l-.9.900"/><path d="M5.800 4.200a2 2 0 0 0-2.800 0L1.200 6a2 2 0 0 0 2.800 2.800l.9-.9"/></g></svg>
<svg width="11" height="11" viewBox="0 0 11 11" style="left:9.5px;top:303.5px"><g fill="#dde2f9"><rect x="1.500" y="7" width="1.600" height="3"/><rect x="4" y="5.800" width="1.600" height="4.200"/><rect x="6.500" y="6.800" width="1.600" height="3.200"/><rect x="9" y="4" width="1.600" height="6"/><rect x="0" y="10.300" width="11" height=".7"/></g><path d="M1.800 5.200L4.800 3 7 4.500 10.200 .8M8.300 .6H10.400V2.700" fill="none" stroke="#dde2f9" stroke-width=".8"/></svg>
<svg width="11" height="12" viewBox="0 0 11 12" style="left:10.0px;top:329.0px"><g fill="#dde2f9"><circle cx="2.600" cy="1.700" r="1.400"/><path d="M0.300 5.600a2.300 2.300 0 0 1 4.600 0z"/><circle cx="8.600" cy="7.500" r="1.400"/><path d="M6.300 11.400a2.300 2.300 0 0 1 4.600 0z"/></g><path d="M6 1.600a3.500 3.500 0 0 1 3.300 3M4.600 10.300A3.500 3.500 0 0 1 1.500 7.300" fill="none" stroke="#dde2f9" stroke-width=".9"/></svg>
<svg width="11" height="10" viewBox="0 0 11 10" style="left:10.0px;top:355.5px"><path d="M2.700 .5H8.300L10.500 3.300 5.500 9.500 .5 3.300z" fill="none" stroke="#dde2f9" stroke-width="1"/><path d="M.5 3.300H10.500M4 .5L3.300 3.300 5.500 9.500 7.700 3.300 7 .5" fill="none" stroke="#dde2f9" stroke-width=".8"/></svg>
<svg width="11" height="11" viewBox="0 0 11 11" style="left:9.5px;top:381.5px"><circle cx="5.500" cy="5.500" r="2.700" fill="none" stroke="#dde2f9" stroke-width="1.600"/><g stroke="#dde2f9" stroke-width="1.700"><path d="M5.500 .3V2M5.500 9V10.700M.3 5.500H2M9 5.500H10.700M1.800 1.800L3 3M8 8L9.200 9.200M9.200 1.800L8 3M3 8L1.800 9.200"/></g></svg>
<svg width="15" height="14" viewBox="0 0 15 14" style="left:9.5px;top:564.5px"><path d="M7 .7H2.500A1.800 1.800 0 0 0 .7 2.500V11.500A1.800 1.800 0 0 0 2.500 13.300H7" fill="none" stroke="#fff" stroke-width="1"/><path d="M4 7H14M11 4L14 7 11 10" fill="none" stroke="#fff" stroke-width="1"/></svg>
  <div class="t" style="left:146.0px;top:101.4px;font-size:8px;font-weight:bold;color:#111;letter-spacing:-0.01px;">Property Management Company</div>
<div class="abs" style="left:634.0px;top:93.0px;width:355.5px;height:23.5px;background:#fff;border:1px solid #ededed;border-radius:12px;box-shadow:0 0 3px rgba(0,0,0,.06)"></div>
<div class="t" style="left:645.2px;top:100.3px;font-size:8.3px;color:#8c8c8c;letter-spacing:0.03px;">Search property management company...</div>
<svg width="10" height="10" viewBox="0 0 10 10" style="left:968.5px;top:100.0px"><circle cx="4.200" cy="4.200" r="3.300" fill="none" stroke="#333" stroke-width=".9"/><path d="M6.700 6.700L9.300 9.300" stroke="#333" stroke-width="1.100"/></svg>
<div class="abs" style="left:147.0px;top:126.0px;width:842.5px;height:30.5px;background:#f7f7f7;border:1px solid #cfcfcf;border-radius:3px"></div>
<div class="t" style="left:158.3px;top:138.6px;font-size:7.9px;color:#333;letter-spacing:0.06px;">Total Items:&nbsp; 26</div>
<div class="t" style="left:719.6px;top:136.7px;font-size:7.7px;font-weight:bold;color:#111;letter-spacing:-0.22px;">Print Listing as:</div>
<svg width="12" height="14" viewBox="0 0 12 14" style="left:778.0px;top:135.3px"><path d="M1.500 .5H8L11.500 4V13.500H1.500z" fill="#fff" stroke="#5aa0f2" stroke-width=".8"/><path d="M8 .5V4H11.500" fill="none" stroke="#5aa0f2" stroke-width=".8"/><rect x="0" y="6.500" width="10.500" height="5" fill="#3b8df0"/><text x="5.200" y="10.400" font-size="3.600" font-weight="bold" fill="#fff" text-anchor="middle" font-family="Liberation Sans, sans-serif">PDF</text></svg>
<div class="abs" style="left:797.0px;top:135.0px;width:1.0px;height:13.0px;background:#d8d8d8"></div>
<svg width="12" height="14" viewBox="0 0 12 14" style="left:805.5px;top:135.3px"><path d="M1.500 .5H8L11.500 4V13.500H1.500z" fill="#fff" stroke="#5aa0f2" stroke-width=".8"/><path d="M8 .5V4H11.500" fill="none" stroke="#5aa0f2" stroke-width=".8"/><rect x="0" y="6.500" width="10.500" height="5" fill="#3b8df0"/><text x="5.200" y="10.400" font-size="3.600" font-weight="bold" fill="#fff" text-anchor="middle" font-family="Liberation Sans, sans-serif">XLSX</text></svg>
<div class="abs" style="left:829.0px;top:131.0px;width:155.0px;height:21.0px;background:#7588d6;border-radius:11px"></div>
<div class="t" style="left:849.0px;top:138.8px;font-size:8px;font-weight:bold;color:#fff;letter-spacing:-0.10px;">+Add Property Mgmt Company</div>
<div class="abs" style="left:147.0px;top:162.0px;width:708.0px;height:389.5px;background:#fff;border:1px solid #c9c9c9;border-radius:2px"></div>
<div class="abs" style="left:148.0px;top:163.0px;width:706.0px;height:26.5px;background:#f6f5fd;border-bottom:1px solid #cfcfcf"></div>
<div class="cb" style="left:157px;top:171px"></div>
<svg width="6.8" height="9" viewBox="0 0 6.800 9" style="left:177.7px;top:170.5px"><path d="M3.400 0L6.800 3.800H0z M3.400 9L0 5.200H6.800z" fill="#111"/></svg>
<div class="t" style="left:186.8px;top:171.6px;font-size:7.8px;font-weight:bold;color:#111;letter-spacing:0.42px;">Name</div>
<svg width="6.8" height="9" viewBox="0 0 6.800 9" style="left:294.7px;top:171.5px"><path d="M3.400 0L6.800 3.800H0z M3.400 9L0 5.200H6.800z" fill="#111"/></svg>
<div class="t" style="left:304.4px;top:172.6px;font-size:7.8px;font-weight:bold;color:#111;letter-spacing:-0.25px;">Division</div>
<svg width="6.8" height="9" viewBox="0 0 6.800 9" style="left:403.7px;top:171.5px"><path d="M3.400 0L6.800 3.800H0z M3.400 9L0 5.200H6.800z" fill="#111"/></svg>
<div class="t" style="left:413.5px;top:172.6px;font-size:7.8px;font-weight:bold;color:#111;letter-spacing:-0.16px;">Location</div>
<svg width="6.8" height="9" viewBox="0 0 6.800 9" style="left:512.7px;top:171.5px"><path d="M3.400 0L6.800 3.800H0z M3.400 9L0 5.200H6.800z" fill="#111"/></svg>
<div class="t" style="left:522.1px;top:172.6px;font-size:7.8px;font-weight:bold;color:#111;letter-spacing:-0.25px;">Sales Person</div>
<svg width="6.8" height="9" viewBox="0 0 6.800 9" style="left:601.2px;top:171.5px"><path d="M3.400 0L6.800 3.800H0z M3.400 9L0 5.200H6.800z" fill="#111"/></svg>
<div class="t" style="left:610.1px;top:172.6px;font-size:7.8px;font-weight:bold;color:#111;letter-spacing:-0.01px;">Marketing Group</div>
<div class="t" style="left:705.4px;top:172.6px;font-size:7.8px;font-weight:bold;color:#111;letter-spacing:-0.11px;">Status</div>
<div class="t" style="left:772.1px;top:172.6px;font-size:7.8px;font-weight:bold;color:#111;letter-spacing:-0.13px;">Action</div>
<div class="cb" style="left:157px;top:205.3px"></div>
<svg width="8" height="8" viewBox="0 0 8 8" style="left:158.5px;top:206.5px"><path d="M.8 4.200L3 6.500 7.300 1" fill="none" stroke="#2fae2f" stroke-width="1.300"/></svg>
<div class="t" style="left:178.0px;top:206.1px;font-size:8px;color:#222;-webkit-text-stroke:.18px #222;letter-spacing:-0.19px;">Spring St Apartments</div>
<div class="t" style="left:294.2px;top:205.8px;font-size:8px;color:#222;-webkit-text-stroke:.18px #222;letter-spacing:0.02px;">My first division</div>
<div class="t" style="left:403.0px;top:205.8px;font-size:8px;color:#222;-webkit-text-stroke:.18px #222;letter-spacing:0.11px;">My first location</div>
<div class="t" style="left:511.3px;top:206.6px;font-size:8px;color:#222;-webkit-text-stroke:.18px #222;letter-spacing:0.02px;">John Deo</div>
<div class="t" style="left:600.4px;top:205.6px;font-size:8px;color:#222;-webkit-text-stroke:.18px #222;letter-spacing:-0.30px;">Group 1</div>
<div class="tog" style="left:705px;top:203.3px"></div>
<div class="ic" style="left:769.5px;top:199.8px"></div>
<svg width="10" height="10" viewBox="0 0 10 10" style="left:775.0px;top:205.0px"><path d="M5 1.300H.9V9.200H8.800V5.400" fill="none" stroke="#222" stroke-width=".9"/><path d="M8 .5L9.500 2 5.200 6.300 3.400 6.600 3.700 4.800z" fill="none" stroke="#222" stroke-width=".9" stroke-linejoin="round"/></svg>
<div class="ic" style="left:795.5px;top:199.8px"></div>
<svg width="11" height="8" viewBox="0 0 11 8" style="left:800.5px;top:206.3px"><path d="M.5 4C2 1.700 3.700 .8 5.500 .8S9 1.700 10.500 4C9 6.300 7.300 7.200 5.500 7.200S2 6.300 .5 4z" fill="none" stroke="#222" stroke-width=".95"/><circle cx="5.500" cy="4" r="1.700" fill="none" stroke="#222" stroke-width="1.100"/></svg>
<div class="ic" style="left:821.5px;top:199.8px"></div>
<svg width="8.6" height="10" viewBox="0 0 8.600 10" style="left:827.7px;top:204.9px"><rect x="1.100" y="2.700" width="6.400" height="6.900" rx=".6" fill="#a4a4a4" stroke="#444" stroke-width=".8"/><path d="M.2 2.300H8.400M3 2.100V.7H5.600V2.100" fill="none" stroke="#444" stroke-width=".9"/><path d="M3.100 4.200V8.200M4.300 4.200V8.200M5.500 4.200V8.200" stroke="#555" stroke-width=".6"/></svg>
<div class="abs" style="left:148.0px;top:230.8px;width:706.0px;height:38.9px;background:#f6f5fd"></div>
<div class="cb" style="left:157px;top:244.6px"></div>
<svg width="8" height="8" viewBox="0 0 8 8" style="left:158.5px;top:245.8px"><path d="M.8 4.200L3 6.500 7.300 1" fill="none" stroke="#2fae2f" stroke-width="1.300"/></svg>
<div class="t" style="left:178.0px;top:245.4px;font-size:8px;color:#222;-webkit-text-stroke:.18px #222;letter-spacing:-0.19px;">Spring St Apartments</div>
<div class="t" style="left:294.2px;top:245.1px;font-size:8px;color:#222;-webkit-text-stroke:.18px #222;letter-spacing:0.02px;">My first division</div>
<div class="t" style="left:403.0px;top:245.1px;font-size:8px;color:#222;-webkit-text-stroke:.18px #222;letter-spacing:0.11px;">My first location</div>
<div class="t" style="left:511.3px;top:245.9px;font-size:8px;color:#222;-webkit-text-stroke:.18px #222;letter-spacing:0.02px;">John Deo</div>
<div class="t" style="left:600.4px;top:244.9px;font-size:8px;color:#222;-webkit-text-stroke:.18px #222;letter-spacing:-0.30px;">Group 1</div>
<div class="tog" style="left:705px;top:242.6px"></div>
<div class="ic" style="left:769.5px;top:239.1px"></div>
<svg width="10" height="10" viewBox="0 0 10 10" style="left:775.0px;top:244.3px"><path d="M5 1.300H.9V9.200H8.800V5.400" fill="none" stroke="#222" stroke-width=".9"/><path d="M8 .5L9.500 2 5.200 6.300 3.400 6.600 3.700 4.800z" fill="none" stroke="#222" stroke-width=".9" stroke-linejoin="round"/></svg>
<div class="ic" style="left:795.5px;top:239.1px"></div>
<svg width="11" height="8" viewBox="0 0 11 8" style="left:800.5px;top:245.6px"><path d="M.5 4C2 1.700 3.700 .8 5.500 .8S9 1.700 10.500 4C9 6.300 7.300 7.200 5.500 7.200S2 6.300 .5 4z" fill="none" stroke="#222" stroke-width=".95"/><circle cx="5.500" cy="4" r="1.700" fill="none" stroke="#222" stroke-width="1.100"/></svg>
<div class="ic" style="left:821.5px;top:239.1px"></div>
<svg width="8.6" height="10" viewBox="0 0 8.600 10" style="left:827.7px;top:244.2px"><rect x="1.100" y="2.700" width="6.400" height="6.900" rx=".6" fill="#a4a4a4" stroke="#444" stroke-width=".8"/><path d="M.2 2.300H8.400M3 2.100V.7H5.600V2.100" fill="none" stroke="#444" stroke-width=".9"/><path d="M3.100 4.200V8.200M4.300 4.200V8.200M5.500 4.200V8.200" stroke="#555" stroke-width=".6"/></svg>
<div class="cb" style="left:157px;top:284.0px"></div>
<div class="t" style="left:178.0px;top:284.8px;font-size:8px;color:#222;-webkit-text-stroke:.18px #222;letter-spacing:-0.19px;">Spring St Apartments</div>
<div class="t" style="left:294.2px;top:284.5px;font-size:8px;color:#222;-webkit-text-stroke:.18px #222;letter-spacing:0.02px;">My first division</div>
<div class="t" style="left:403.0px;top:284.5px;font-size:8px;color:#222;-webkit-text-stroke:.18px #222;letter-spacing:0.11px;">My first location</div>
<div class="t" style="left:511.3px;top:285.3px;font-size:8px;color:#222;-webkit-text-stroke:.18px #222;letter-spacing:0.02px;">John Deo</div>
<div class="t" style="left:600.4px;top:284.3px;font-size:8px;color:#222;-webkit-text-stroke:.18px #222;letter-spacing:-0.30px;">Group 1</div>
<div class="tog" style="left:705px;top:282.0px"></div>
<div class="ic" style="left:769.5px;top:278.5px"></div>
<svg width="10" height="10" viewBox="0 0 10 10" style="left:775.0px;top:283.7px"><path d="M5 1.300H.9V9.200H8.800V5.400" fill="none" stroke="#222" stroke-width=".9"/><path d="M8 .5L9.500 2 5.200 6.300 3.400 6.600 3.700 4.800z" fill="none" stroke="#222" stroke-width=".9" stroke-linejoin="round"/></svg>
<div class="ic" style="left:795.5px;top:278.5px"></div>
<svg width="11" height="8" viewBox="0 0 11 8" style="left:800.5px;top:285.0px"><path d="M.5 4C2 1.700 3.700 .8 5.500 .8S9 1.700 10.500 4C9 6.300 7.300 7.200 5.500 7.200S2 6.300 .5 4z" fill="none" stroke="#222" stroke-width=".95"/><circle cx="5.500" cy="4" r="1.700" fill="none" stroke="#222" stroke-width="1.100"/></svg>
<div class="ic" style="left:821.5px;top:278.5px"></div>
<svg width="8.6" height="10" viewBox="0 0 8.600 10" style="left:827.7px;top:283.6px"><rect x="1.100" y="2.700" width="6.400" height="6.900" rx=".6" fill="#a4a4a4" stroke="#444" stroke-width=".8"/><path d="M.2 2.300H8.400M3 2.100V.7H5.600V2.100" fill="none" stroke="#444" stroke-width=".9"/><path d="M3.100 4.200V8.200M4.300 4.200V8.200M5.500 4.200V8.200" stroke="#555" stroke-width=".6"/></svg>
<div class="abs" style="left:148.0px;top:309.4px;width:706.0px;height:38.9px;background:#f6f5fd"></div>
<div class="cb" style="left:157px;top:323.3px"></div>
<svg width="8" height="8" viewBox="0 0 8 8" style="left:158.5px;top:324.5px"><path d="M.8 4.200L3 6.500 7.300 1" fill="none" stroke="#2fae2f" stroke-width="1.300"/></svg>
<div class="t" style="left:178.0px;top:324.1px;font-size:8px;color:#222;-webkit-text-stroke:.18px #222;letter-spacing:-0.19px;">Spring St Apartments</div>
<div class="t" style="left:294.2px;top:323.8px;font-size:8px;color:#222;-webkit-text-stroke:.18px #222;letter-spacing:0.02px;">My first division</div>
<div class="t" style="left:403.0px;top:323.8px;font-size:8px;color:#222;-webkit-text-stroke:.18px #222;letter-spacing:0.11px;">My first location</div>
<div class="t" style="left:511.3px;top:324.6px;font-size:8px;color:#222;-webkit-text-stroke:.18px #222;letter-spacing:0.02px;">John Deo</div>
<div class="t" style="left:600.4px;top:323.6px;font-size:8px;color:#222;-webkit-text-stroke:.18px #222;letter-spacing:-0.30px;">Group 1</div>
<div class="tog" style="left:705px;top:321.3px"></div>
<div class="ic" style="left:769.5px;top:317.8px"></div>
<svg width="10" height="10" viewBox="0 0 10 10" style="left:775.0px;top:323.0px"><path d="M5 1.300H.9V9.200H8.800V5.400" fill="none" stroke="#222" stroke-width=".9"/><path d="M8 .5L9.500 2 5.200 6.300 3.400 6.600 3.700 4.800z" fill="none" stroke="#222" stroke-width=".9" stroke-linejoin="round"/></svg>
<div class="ic" style="left:795.5px;top:317.8px"></div>
<svg width="11" height="8" viewBox="0 0 11 8" style="left:800.5px;top:324.3px"><path d="M.5 4C2 1.700 3.700 .8 5.500 .8S9 1.700 10.500 4C9 6.300 7.300 7.200 5.500 7.200S2 6.300 .5 4z" fill="none" stroke="#222" stroke-width=".95"/><circle cx="5.500" cy="4" r="1.700" fill="none" stroke="#222" stroke-width="1.100"/></svg>
<div class="ic" style="left:821.5px;top:317.8px"></div>
<svg width="8.6" height="10" viewBox="0 0 8.600 10" style="left:827.7px;top:322.9px"><rect x="1.100" y="2.700" width="6.400" height="6.900" rx=".6" fill="#a4a4a4" stroke="#444" stroke-width=".8"/><path d="M.2 2.300H8.400M3 2.100V.7H5.600V2.100" fill="none" stroke="#444" stroke-width=".9"/><path d="M3.100 4.200V8.200M4.300 4.200V8.200M5.500 4.200V8.200" stroke="#555" stroke-width=".6"/></svg>
<div class="cb" style="left:157px;top:362.7px"></div>
<div class="t" style="left:178.0px;top:363.5px;font-size:8px;color:#222;-webkit-text-stroke:.18px #222;letter-spacing:-0.19px;">Spring St Apartments</div>
<div class="t" style="left:294.2px;top:363.2px;font-size:8px;color:#222;-webkit-text-stroke:.18px #222;letter-spacing:0.02px;">My first division</div>
<div class="t" style="left:403.0px;top:363.2px;font-size:8px;color:#222;-webkit-text-stroke:.18px #222;letter-spacing:0.11px;">My first location</div>
<div class="t" style="left:511.3px;top:364.0px;font-size:8px;color:#222;-webkit-text-stroke:.18px #222;letter-spacing:0.02px;">John Deo</div>
<div class="t" style="left:600.4px;top:363.0px;font-size:8px;color:#222;-webkit-text-stroke:.18px #222;letter-spacing:-0.30px;">Group 1</div>
<div class="tog" style="left:705px;top:360.7px"></div>
<div class="ic" style="left:769.5px;top:357.2px"></div>
<svg width="10" height="10" viewBox="0 0 10 10" style="left:775.0px;top:362.4px"><path d="M5 1.300H.9V9.200H8.800V5.400" fill="none" stroke="#222" stroke-width=".9"/><path d="M8 .5L9.500 2 5.200 6.300 3.400 6.600 3.700 4.800z" fill="none" stroke="#222" stroke-width=".9" stroke-linejoin="round"/></svg>
<div class="ic" style="left:795.5px;top:357.2px"></div>
<svg width="11" height="8" viewBox="0 0 11 8" style="left:800.5px;top:363.7px"><path d="M.5 4C2 1.700 3.700 .8 5.500 .8S9 1.700 10.500 4C9 6.300 7.300 7.200 5.500 7.200S2 6.300 .5 4z" fill="none" stroke="#222" stroke-width=".95"/><circle cx="5.500" cy="4" r="1.700" fill="none" stroke="#222" stroke-width="1.100"/></svg>
<div class="ic" style="left:821.5px;top:357.2px"></div>
<svg width="8.6" height="10" viewBox="0 0 8.600 10" style="left:827.7px;top:362.3px"><rect x="1.100" y="2.700" width="6.400" height="6.900" rx=".6" fill="#a4a4a4" stroke="#444" stroke-width=".8"/><path d="M.2 2.300H8.400M3 2.100V.7H5.600V2.100" fill="none" stroke="#444" stroke-width=".9"/><path d="M3.100 4.200V8.200M4.300 4.200V8.200M5.500 4.200V8.200" stroke="#555" stroke-width=".6"/></svg>
<div class="abs" style="left:148.0px;top:388.1px;width:706.0px;height:38.9px;background:#f6f5fd"></div>
<div class="cb" style="left:157px;top:402.0px"></div>
<div class="t" style="left:178.0px;top:402.8px;font-size:8px;color:#222;-webkit-text-stroke:.18px #222;letter-spacing:-0.19px;">Spring St Apartments</div>
<div class="t" style="left:294.2px;top:402.5px;font-size:8px;color:#222;-webkit-text-stroke:.18px #222;letter-spacing:0.02px;">My first division</div>
<div class="t" style="left:403.0px;top:402.5px;font-size:8px;color:#222;-webkit-text-stroke:.18px #222;letter-spacing:0.11px;">My first location</div>
<div class="t" style="left:511.3px;top:403.3px;font-size:8px;color:#222;-webkit-text-stroke:.18px #222;letter-spacing:0.02px;">John Deo</div>
<div class="t" style="left:600.4px;top:402.3px;font-size:8px;color:#222;-webkit-text-stroke:.18px #222;letter-spacing:-0.30px;">Group 1</div>
<div class="tog" style="left:705px;top:400.0px"></div>
<div class="ic" style="left:769.5px;top:396.5px"></div>
<svg width="10" height="10" viewBox="0 0 10 10" style="left:775.0px;top:401.7px"><path d="M5 1.300H.9V9.200H8.800V5.400" fill="none" stroke="#222" stroke-width=".9"/><path d="M8 .5L9.500 2 5.200 6.300 3.400 6.600 3.700 4.800z" fill="none" stroke="#222" stroke-width=".9" stroke-linejoin="round"/></svg>
<div class="ic" style="left:795.5px;top:396.5px"></div>
<svg width="11" height="8" viewBox="0 0 11 8" style="left:800.5px;top:403.0px"><path d="M.5 4C2 1.700 3.700 .8 5.500 .8S9 1.700 10.500 4C9 6.300 7.300 7.200 5.500 7.200S2 6.300 .5 4z" fill="none" stroke="#222" stroke-width=".95"/><circle cx="5.500" cy="4" r="1.700" fill="none" stroke="#222" stroke-width="1.100"/></svg>
<div class="ic" style="left:821.5px;top:396.5px"></div>
<svg width="8.6" height="10" viewBox="0 0 8.600 10" style="left:827.7px;top:401.6px"><rect x="1.100" y="2.700" width="6.400" height="6.900" rx=".6" fill="#a4a4a4" stroke="#444" stroke-width=".8"/><path d="M.2 2.300H8.400M3 2.100V.7H5.600V2.100" fill="none" stroke="#444" stroke-width=".9"/><path d="M3.100 4.200V8.200M4.300 4.200V8.200M5.500 4.200V8.200" stroke="#555" stroke-width=".6"/></svg>
<div class="cb" style="left:157px;top:441.4px"></div>
<div class="t" style="left:178.0px;top:442.2px;font-size:8px;color:#222;-webkit-text-stroke:.18px #222;letter-spacing:-0.19px;">Spring St Apartments</div>
<div class="t" style="left:294.2px;top:441.9px;font-size:8px;color:#222;-webkit-text-stroke:.18px #222;letter-spacing:0.02px;">My first division</div>
<div class="t" style="left:403.0px;top:441.9px;font-size:8px;color:#222;-webkit-text-stroke:.18px #222;letter-spacing:0.11px;">My first location</div>
<div class="t" style="left:511.3px;top:442.7px;font-size:8px;color:#222;-webkit-text-stroke:.18px #222;letter-spacing:0.02px;">John Deo</div>
<div class="t" style="left:600.4px;top:441.7px;font-size:8px;color:#222;-webkit-text-stroke:.18px #222;letter-spacing:-0.30px;">Group 1</div>
<div class="tog" style="left:705px;top:439.4px"></div>
<div class="ic" style="left:769.5px;top:435.9px"></div>
<svg width="10" height="10" viewBox="0 0 10 10" style="left:775.0px;top:441.1px"><path d="M5 1.300H.9V9.200H8.800V5.400" fill="none" stroke="#222" stroke-width=".9"/><path d="M8 .5L9.500 2 5.200 6.300 3.400 6.600 3.700 4.800z" fill="none" stroke="#222" stroke-width=".9" stroke-linejoin="round"/></svg>
<div class="ic" style="left:795.5px;top:435.9px"></div>
<svg width="11" height="8" viewBox="0 0 11 8" style="left:800.5px;top:442.4px"><path d="M.5 4C2 1.700 3.700 .8 5.500 .8S9 1.700 10.500 4C9 6.300 7.300 7.200 5.500 7.200S2 6.300 .5 4z" fill="none" stroke="#222" stroke-width=".95"/><circle cx="5.500" cy="4" r="1.700" fill="none" stroke="#222" stroke-width="1.100"/></svg>
<div class="ic" style="left:821.5px;top:435.9px"></div>
<svg width="8.6" height="10" viewBox="0 0 8.600 10" style="left:827.7px;top:441.0px"><rect x="1.100" y="2.700" width="6.400" height="6.900" rx=".6" fill="#a4a4a4" stroke="#444" stroke-width=".8"/><path d="M.2 2.300H8.400M3 2.100V.7H5.600V2.100" fill="none" stroke="#444" stroke-width=".9"/><path d="M3.100 4.200V8.200M4.300 4.200V8.200M5.500 4.200V8.200" stroke="#555" stroke-width=".6"/></svg>
<div class="abs" style="left:148.0px;top:466.8px;width:706.0px;height:38.9px;background:#f6f5fd"></div>
<div class="cb" style="left:157px;top:480.7px"></div>
<div class="t" style="left:178.0px;top:481.5px;font-size:8px;color:#222;-webkit-text-stroke:.18px #222;letter-spacing:-0.19px;">Spring St Apartments</div>
<div class="t" style="left:294.2px;top:481.2px;font-size:8px;color:#222;-webkit-text-stroke:.18px #222;letter-spacing:0.02px;">My first division</div>
<div class="t" style="left:403.0px;top:481.2px;font-size:8px;color:#222;-webkit-text-stroke:.18px #222;letter-spacing:0.11px;">My first location</div>
<div class="t" style="left:511.3px;top:482.0px;font-size:8px;color:#222;-webkit-text-stroke:.18px #222;letter-spacing:0.02px;">John Deo</div>
<div class="t" style="left:600.4px;top:481.0px;font-size:8px;color:#222;-webkit-text-stroke:.18px #222;letter-spacing:-0.30px;">Group 1</div>
<div class="tog" style="left:705px;top:478.7px"></div>
<div class="ic" style="left:769.5px;top:475.2px"></div>
<svg width="10" height="10" viewBox="0 0 10 10" style="left:775.0px;top:480.4px"><path d="M5 1.300H.9V9.200H8.800V5.400" fill="none" stroke="#222" stroke-width=".9"/><path d="M8 .5L9.500 2 5.200 6.300 3.400 6.600 3.700 4.800z" fill="none" stroke="#222" stroke-width=".9" stroke-linejoin="round"/></svg>
<div class="ic" style="left:795.5px;top:475.2px"></div>
<svg width="11" height="8" viewBox="0 0 11 8" style="left:800.5px;top:481.7px"><path d="M.5 4C2 1.700 3.700 .8 5.500 .8S9 1.700 10.500 4C9 6.300 7.300 7.200 5.500 7.200S2 6.300 .5 4z" fill="none" stroke="#222" stroke-width=".95"/><circle cx="5.500" cy="4" r="1.700" fill="none" stroke="#222" stroke-width="1.100"/></svg>
<div class="ic" style="left:821.5px;top:475.2px"></div>
<svg width="8.6" height="10" viewBox="0 0 8.600 10" style="left:827.7px;top:480.3px"><rect x="1.100" y="2.700" width="6.400" height="6.900" rx=".6" fill="#a4a4a4" stroke="#444" stroke-width=".8"/><path d="M.2 2.300H8.400M3 2.100V.7H5.600V2.100" fill="none" stroke="#444" stroke-width=".9"/><path d="M3.100 4.200V8.200M4.300 4.200V8.200M5.500 4.200V8.200" stroke="#555" stroke-width=".6"/></svg>
<div class="t" style="left:156.9px;top:525.6px;font-size:7.8px;color:#333;letter-spacing:-0.09px;">Page Size</div>
<div class="abs" style="left:201.0px;top:519.5px;width:35.5px;height:22.0px;background:#efefef;border:1px solid #bdbdbd;border-radius:2px"></div>
<div class="t" style="left:206.0px;top:526.5px;font-size:8px;color:#111;">1</div>
<div class="abs" style="left:224.8px;top:528.5px;border-left:3.800px solid transparent;border-right:3.800px solid transparent;border-top:4.300px solid #111"></div>
<div class="abs" style="left:574.0px;top:519.5px;width:264.0px;height:22.0px;border:1px solid #5a66a8;border-radius:2px;background:#fff"></div>
<div class="abs" style="left:627.5px;top:519.5px;width:26.0px;height:22.0px;background:#505d99"></div>
<div class="abs" style="left:627.0px;top:520.5px;width:1.0px;height:20.0px;background:#b9bfdd"></div>
<div class="abs" style="left:653.0px;top:520.5px;width:1.0px;height:20.0px;background:#b9bfdd"></div>
<div class="abs" style="left:679.8px;top:520.5px;width:1.0px;height:20.0px;background:#b9bfdd"></div>
<div class="abs" style="left:706.3px;top:520.5px;width:1.0px;height:20.0px;background:#b9bfdd"></div>
<div class="abs" style="left:733.0px;top:520.5px;width:1.0px;height:20.0px;background:#b9bfdd"></div>
<div class="abs" style="left:759.7px;top:520.5px;width:1.0px;height:20.0px;background:#b9bfdd"></div>
<div class="abs" style="left:785.9px;top:520.5px;width:1.0px;height:20.0px;background:#b9bfdd"></div>
<div class="t" style="left:584.7px;top:526.6px;font-size:7.800px;font-weight:bold;color:#4b58a0;letter-spacing:-0.24px;">Previous</div>
<div class="t" style="left:804.1px;top:526.6px;font-size:7.800px;font-weight:bold;color:#4b58a0;letter-spacing:-0.30px;">Next</div>
<div class="t" style="left:539.8px;width:200px;text-align:center;top:526.6px;font-size:7.8px;font-weight:bold;color:#fff;">1</div>
<div class="t" style="left:565.6px;width:200px;text-align:center;top:526.6px;font-size:7.8px;color:#333;">2</div>
<div class="t" style="left:592.2px;width:200px;text-align:center;top:526.6px;font-size:7.8px;color:#333;">3</div>
<div class="t" style="left:618.8px;width:200px;text-align:center;top:526.6px;font-size:7.8px;color:#333;">4</div>
<div class="t" style="left:645.5px;width:200px;text-align:center;top:526.6px;font-size:7.8px;color:#333;">5</div>
<div class="t" style="left:672.0px;width:200px;text-align:center;top:526.6px;font-size:7.8px;color:#333;">6</div>
<div class="abs" style="left:865.0px;top:162.0px;width:125.0px;height:389.5px;background:#f7f7f7;border:1px solid #c9c9c9;border-radius:2px"></div>
<div class="t" style="left:869.5px;top:175.6px;font-size:7.8px;font-weight:bold;color:#222;letter-spacing:-0.29px;">Filter By</div>
<div class="t" style="left:869.5px;top:196.8px;font-size:7.6px;font-weight:bold;color:#222;letter-spacing:-0.19px;">Division</div>
<div class="abs" style="left:870.0px;top:207.0px;width:114.5px;height:17.5px;background:#fff;border:1px solid #c6c6c6;border-radius:2px"></div>
<div class="t" style="left:875.7px;top:211.6px;font-size:8.400px;color:#8a8a8a;-webkit-text-stroke:.12px #8a8a8a;letter-spacing:-0.16px;">Select division</div>
<div class="abs" style="left:970.6px;top:213.9px;border-left:3.800px solid transparent;border-right:3.800px solid transparent;border-top:4.300px solid #111"></div>
<div class="t" style="left:869.5px;top:230.6px;font-size:7.6px;font-weight:bold;color:#222;letter-spacing:-0.00px;">Marketing Group</div>
<div class="abs" style="left:870.0px;top:240.0px;width:114.5px;height:18.0px;background:#fff;border:1px solid #c6c6c6;border-radius:2px"></div>
<div class="t" style="left:875.7px;top:244.8px;font-size:8.400px;color:#8a8a8a;-webkit-text-stroke:.12px #8a8a8a;letter-spacing:-0.06px;">Select marketing group</div>
<div class="abs" style="left:970.6px;top:247.1px;border-left:3.800px solid transparent;border-right:3.800px solid transparent;border-top:4.300px solid #111"></div>
<div class="t" style="left:869.5px;top:265.6px;font-size:6.600px;font-weight:bold;color:#222;letter-spacing:-0.41px;">Sales Person</div>
<div class="abs" style="left:870.0px;top:275.0px;width:114.5px;height:17.4px;background:#fff;border:1px solid #c6c6c6;border-radius:2px"></div>
<div class="t" style="left:875.7px;top:279.5px;font-size:8.400px;color:#8a8a8a;-webkit-text-stroke:.12px #8a8a8a;letter-spacing:-0.19px;">Select sales person</div>
<div class="abs" style="left:970.6px;top:281.8px;border-left:3.800px solid transparent;border-right:3.800px solid transparent;border-top:4.300px solid #111"></div>
<div class="t" style="left:869.5px;top:300.7px;font-size:6.600px;font-weight:bold;color:#222;letter-spacing:-0.26px;">Location</div>
<div class="abs" style="left:870.0px;top:310.0px;width:114.5px;height:17.4px;background:#fff;border:1px solid #c6c6c6;border-radius:2px"></div>
<div class="t" style="left:875.7px;top:314.5px;font-size:8.400px;color:#8a8a8a;-webkit-text-stroke:.12px #8a8a8a;letter-spacing:-0.10px;">Select location</div>
<div class="abs" style="left:970.6px;top:316.8px;border-left:3.800px solid transparent;border-right:3.800px solid transparent;border-top:4.300px solid #111"></div>
<div class="t" style="left:869.5px;top:334.8px;font-size:6.600px;font-weight:bold;color:#222;letter-spacing:-0.27px;">Status</div>
<div class="abs" style="left:870.0px;top:344.0px;width:114.5px;height:17.4px;background:#fff;border:1px solid #c6c6c6;border-radius:2px"></div>
<div class="t" style="left:875.7px;top:348.5px;font-size:8.400px;color:#8a8a8a;-webkit-text-stroke:.12px #8a8a8a;letter-spacing:-0.16px;">Select status</div>
<div class="abs" style="left:970.6px;top:350.8px;border-left:3.800px solid transparent;border-right:3.800px solid transparent;border-top:4.300px solid #111"></div>
<div class="abs" style="left:870.0px;top:374.0px;width:62.5px;height:16.5px;background:linear-gradient(#ececec,#d4d4d4);border:1px solid #4a4a4a;border-radius:9px"></div>
<div class="t" style="left:881.0px;top:378.1px;font-size:7.800px;font-weight:bold;color:#111;letter-spacing:-0.26px;">Apply Filter</div>
<div class="abs" style="left:136.0px;top:561.5px;width:864.0px;height:24.5px;background:#f0f1f6"></div>
<div class="t" style="left:421.0px;top:570.7px;font-size:7.600px;color:#222;-webkit-text-stroke:.15px #222;letter-spacing:0.11px;">© 2020 Dalorian. All rights reserved. | Privacy</div>
</div>
</body>
</html>
